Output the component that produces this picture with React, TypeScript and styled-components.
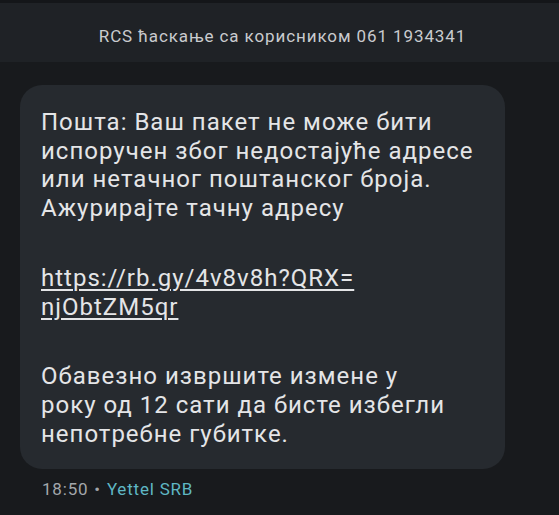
import React from 'react';
import styled, { createGlobalStyle } from 'styled-components';

const GlobalStyle = createGlobalStyle`
  html, body {
    margin: 0;
    padding: 0;
    background: #181a1d;
  }
  body {
    font-family: Roboto, "Noto Sans", "Liberation Sans", sans-serif;
    -webkit-font-smoothing: antialiased;
  }
`;

const Screen = styled.div`
  width: 559px;
  height: 515px;
  background: #181a1d;
  border-top: 3px solid #141619;
  box-sizing: border-box;
  display: flex;
  flex-direction: column;
  overflow: hidden;
`;

const Header = styled.div`
  height: 59px;
  box-sizing: border-box;
  padding: 6px 0 0 6px;
  background: #1f2226;
  display: flex;
  align-items: center;
  justify-content: center;
  color: #c9cbce;
  font-size: 17px;
  letter-spacing: 0.9px;
`;

const Thread = styled.div`
  padding: 23px 54px 0 20px;
  display: flex;
  flex-direction: column;
`;

const Bubble = styled.div`
  background: #262a2f;
  border-radius: 22px;
  padding: 23px 20px 21px 21px;
  color: #e4e5e7;
  font-size: 24px;
  letter-spacing: 1px;
  line-height: 28.7px;
`;

const Para = styled.p`
  margin: 0;
  & + & {
    margin-top: 41px;
  }
`;

const Link = styled.a`
  color: inherit;
  text-decoration: underline;
  text-underline-offset: 3px;
  text-decoration-thickness: 1.5px;
`;

const Meta = styled.div`
  margin: 10px 0 0 22px;
  font-size: 17px;
  letter-spacing: 0.8px;
  color: #a3a7ab;
  display: flex;
  gap: 6px;
`;

const Sim = styled.span<{ tint: string }>`
  color: ${p => p.tint};
`;

const App: React.FunctionComponent = () => {
  return (
    <>
      <GlobalStyle />
      <Screen>
        <Header>RCS ћаскање са корисником 061 1934341</Header>
        <Thread>
          <Bubble>
            <Para>
              Пошта: Ваш пакет не може бити
              <br />
              испоручен због недостајуће адресе
              <br />
              или нетачног поштанског броја.
              <br />
              Ажурирајте тачну адресу
            </Para>
            <Para>
              <Link href="#">https://rb.gy/4v8v8h?QRX=</Link>
              <br />
              <Link href="#">njObtZM5qr</Link>
            </Para>
            <Para>
              Обавезно извршите измене у
              <br />
              року од 12 сати да бисте избегли
              <br />
              непотребне губитке.
            </Para>
          </Bubble>
          <Meta>
            <span>18:50</span>
            <span>•</span>
            <Sim tint="#5fb7c4">Yettel SRB</Sim>
          </Meta>
        </Thread>
      </Screen>
    </>
  );
};

export default App;
